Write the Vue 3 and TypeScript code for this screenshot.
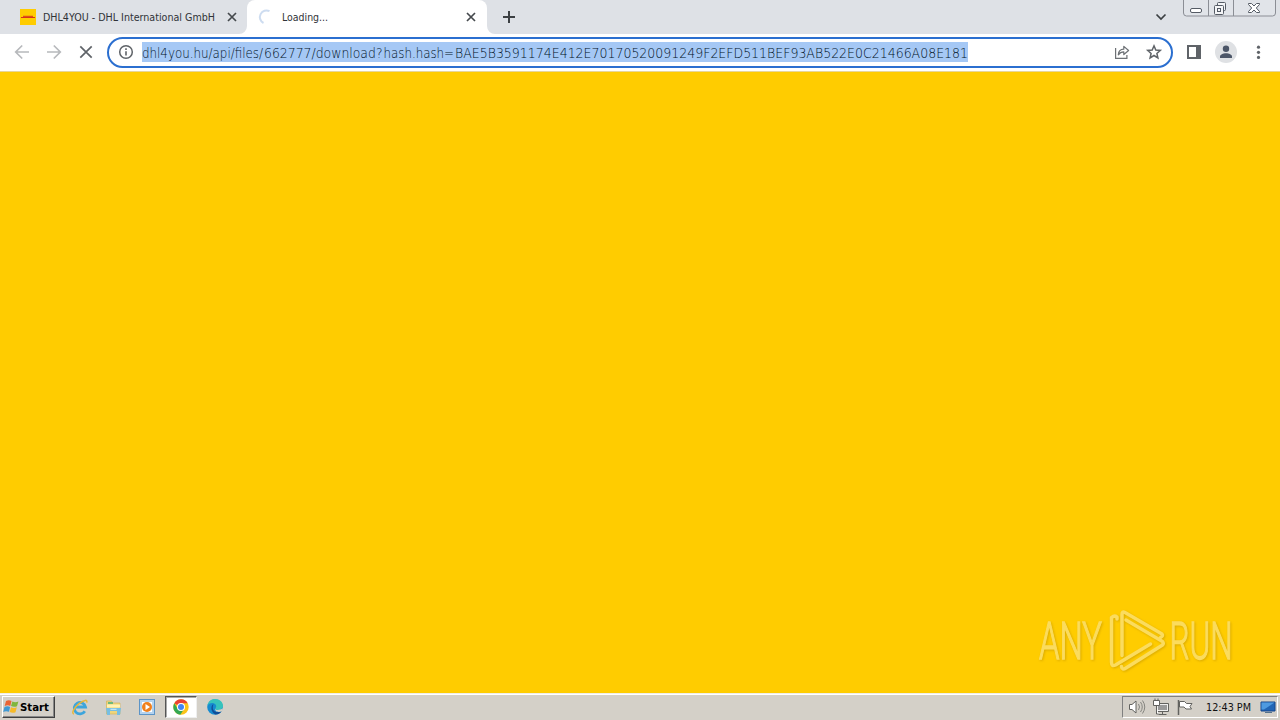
<script setup lang="ts">
interface Segment {
  text: string
  x: number
  width: number
}

const address: Segment[] = [
  { text: 'dhl4you.hu/api/files/', x: 0, width: 121 },
  { text: '662777/download?', x: 122, width: 118.5 },
  { text: 'hash.hash=', x: 241.5, width: 70.5 },
  { text: 'BAE5B3591174E412E70170520091249F2EFD511BEF93AB522E0C21466A08E181', x: 313, width: 513 },
]
</script>

<template>
  <div class="screen">
    <header class="tabs">
      <div class="tab first">
        <svg class="favicon" width="16" height="16" viewBox="0 0 16 16">
          <path fill="#fc0" d="M0 0h16v16H0z" />
          <path d="M1 8.500h14M3 7.300h10" stroke="#d8321c" stroke-width="1" />
        </svg>
        <svg class="title" width="176" height="20"><text x="0" y="14" textLength="172" lengthAdjust="spacingAndGlyphs">DHL4YOU - DHL International GmbH</text></svg>
        <svg class="close" width="10" height="10" viewBox="0 0 10 10"><path d="M1 1l8 8M9 1l-8 8" /></svg>
      </div>
      <div class="tab active">
        <svg class="curve left" width="8" height="8"><path d="M8 0v8H0a8 8 0 0 0 8-8" fill="#fff" /></svg>
        <svg class="favicon" width="16" height="16" viewBox="0 0 16 16"><path d="M11.500 2.200A6.200 6.200 0 1 0 5.500 14" fill="none" stroke="#cddcf0" stroke-width="2" /></svg>
        <svg class="title" width="176" height="20"><text x="0" y="14" textLength="46" lengthAdjust="spacingAndGlyphs">Loading...</text></svg>
        <svg class="close" width="10" height="10" viewBox="0 0 10 10"><path d="M1 1l8 8M9 1l-8 8" /></svg>
        <svg class="curve right" width="8" height="8"><path d="M0 0v8h8a8 8 0 0 1-8-8" fill="#fff" /></svg>
      </div>
      <svg class="plus" width="14" height="14"><path d="M7 1v12M1 7h12" stroke="#3c4043" stroke-width="2" /></svg>
      <svg class="chevron" width="12" height="8"><path d="M1.500 1.500L6 6l4.500-4.500" fill="none" stroke="#3c4043" stroke-width="1.700" /></svg>
      <svg class="window-controls" width="95" height="18" viewBox="0 0 95 18">
        <path d="M.5 0v13a3 3 0 0 0 3 3h86a3 3 0 0 0 3-3V0M25.500 0v16M50.500 0v16" fill="#e1e4e9" stroke="#8b8e95" />
        <rect x="7.500" y="8.500" width="11" height="4" rx="1.500" fill="#fff" stroke="#555b65" />
        <g fill="#f4f5f7" stroke="#555b65"><rect x="34.500" y="2.500" width="8" height="8" rx="1" /><rect x="31.500" y="5.500" width="9" height="9" rx="1" /><rect x="34.500" y="8.500" width="3" height="3" /></g>
        <path d="M66.500 3.500h3l2.500 2.500 2.500-2.500h3v1L74.300 8l3.200 3.500v1h-3L72 10l-2.500 2.500h-3v-1L69.700 8l-3.200-3.500z" fill="#fff" stroke="#555b65" transform="translate(-1 0)" />
      </svg>
    </header>

    <nav class="toolbar">
      <svg class="navigation" width="107" height="37" viewBox="0 34 107 37" fill="none" stroke-width="1.700">
        <g stroke="#b7b9bc"><path d="M29 52H15.800M22.200 45.500L15.700 52l6.500 6.500" /><path d="M47 52h13.200M53.800 45.500l6.500 6.500-6.500 6.500" /></g>
        <path d="M80.300 46.300l11.400 11.400M91.700 46.300L80.300 57.700" stroke="#5f6368" />
      </svg>
      <div class="omnibox">
        <svg class="info" width="16" height="16" viewBox="0 0 16 16"><circle cx="8" cy="8" r="6.300" fill="none" stroke="#5f6368" stroke-width="1.500" /><path d="M8 7.200v4.200M8 4.300v1.600" stroke="#5f6368" stroke-width="1.600" /></svg>
        <svg class="url" width="826" height="20">
          <text v-for="part in address" :key="part.x" :x="part.x" y="16" :textLength="part.width" lengthAdjust="spacingAndGlyphs">{{ part.text }}</text>
        </svg>
        <svg class="share" width="16" height="16" viewBox="0 0 16 16" fill="none" stroke="#6d7175" stroke-width="1.200"><path d="M1.600 4v10.400h11.300V11" /><path d="M4.300 10.800C4.500 7 6.400 5.300 9.800 5.200V2.400L14.600 6.500 9.800 10.500V7.800C7.400 7.800 5.700 8.700 4.300 10.800z" stroke-linejoin="round" /></svg>
        <svg class="star" width="16" height="16" viewBox="0 0 16 16"><path d="M8 1.800l1.800 4.200 4.500.4-3.400 3 1 4.500L8 11.500l-3.900 2.400 1-4.500-3.400-3 4.500-.4z" fill="none" stroke="#5f6368" stroke-width="1.500" /></svg>
      </div>
      <svg class="actions" width="107" height="37" viewBox="1173 34 107 37">
        <path d="M1188 46h12v12h-12z" fill="none" stroke="#5f6368" stroke-width="2" /><path d="M1196 45h5v14h-5z" fill="#5f6368" />
        <circle cx="1226" cy="52" r="11" fill="#dfe1e4" /><circle cx="1226" cy="48.800" r="3.200" fill="#4c5668" /><path d="M1220 58v-1.500c0-2 3-3.300 6-3.300s6 1.300 6 3.300V58z" fill="#4c5668" />
        <g fill="#5f6368"><circle cx="1258.500" cy="47.200" r="1.600" /><circle cx="1258.500" cy="52.300" r="1.600" /><circle cx="1258.500" cy="57.400" r="1.600" /></g>
      </svg>
    </nav>

    <main class="page">
      <svg class="watermark" width="198" height="68" viewBox="1036 607 198 68">
        <g class="lettering"><text transform="translate(1039 659) scale(1 1.380)" textLength="63" lengthAdjust="spacingAndGlyphs">ANY</text><text transform="translate(1169.500 659) scale(1 1.380)" textLength="63" lengthAdjust="spacingAndGlyphs">RUN</text></g>
        <g class="play">
          <path d="M1122 655.500V614.500q0-3.500 3-2l37 21.500q1.500 2-1.500 3.500" />
          <path d="M1117 619v-2q-2.500-2-5.500.5V662q0 5 4 3l35-21" />
          <path d="M1126 620l36.500 21.500q1.500 2 0 3.500L1126 668q-4 2.500-4.500-1.500" />
        </g>
      </svg>
    </main>

    <footer class="taskbar">
      <div class="start">
        <svg width="17" height="16" viewBox="0 0 17 16">
          <path d="M3 2c2-1 4-.8 5.500 0L7.300 7C5.600 6 3.800 6.100 1.700 7z" fill="#ea6435" /><path d="M9.400 2.500c2 .9 4 .9 6-.1L14 7.200c-2 .9-4 .8-6-.1z" fill="#80b63d" /><path d="M1.500 8c2-.9 4-.9 5.600 0L6 12.800c-2-.9-4-.8-5.800.1z" fill="#4099d4" /><path d="M8 8.300c2 .9 4 .9 5.800 0l-1.300 4.900c-2 .8-4 .7-5.800-.2z" fill="#f6ba29" />
        </svg>
        <svg width="30" height="18"><text x="0" y="13" textLength="29" lengthAdjust="spacingAndGlyphs">Start</text></svg>
      </div>
      <svg class="quick" width="94" height="24" viewBox="68 695 94 24">
        <path d="M84.800 711.200a5.700 5.700 0 1 1 .7-4.200H75.500" fill="none" stroke="#3da5dc" stroke-width="2.800" /><path d="M74 714c-3-.5 0-6.500 5-10.400s9-4.300 7.600-1" fill="none" stroke="#e8b73a" stroke-width="1.500" />
        <path d="M106.500 701h5l1 2h7.500v11h-13.500z" fill="#efd57b" stroke="#d6b55b" stroke-width=".7" /><path d="M108 702h5v2h-5z" fill="#6eb97a" /><path d="M107 704.500h13v3h-13z" fill="#fff2b5" /><path d="M106 708h15l-1 7h-3v-4h-7v4h-3z" fill="#77bee3" /><path d="M110.500 709.300h6" stroke="#d1eff9" />
        <rect x="139.500" y="699.500" width="15" height="15" fill="#b4d3ef" stroke="#5c94c7" /><path d="M142 702h10v10h-10z" fill="#fff" /><circle cx="147" cy="707" r="5" fill="#ef801e" /><path d="M145.500 704l4.500 3-4.500 3z" fill="#fff" />
      </svg>
      <div class="running">
        <svg width="16" height="16" viewBox="0 0 16 16"><circle cx="8" cy="8" r="7.700" fill="#fbc319" /><path d="M8 8L1.300 4.200A7.700 7.700 0 0 1 14.700 4.200H8z" fill="#e94235" /><path d="M1.300 4.200A7.700 7.700 0 0 0 7.300 15.700L11.200 9.800 8 8 4.800 9.900z" fill="#34a853" /><circle cx="8" cy="8" r="4" fill="#fff" /><circle cx="8" cy="8" r="3" fill="#4285f4" /></svg>
      </div>
      <svg class="edge" width="16" height="16" viewBox="0 0 16 16"><circle cx="8" cy="8" r="7.800" fill="#168bd0" /><path d="M.3 7C1.300 2.500 4 0 8 0c4.700 0 8 3.400 8 6.500 0 2.700-2.200 4.500-5 4.500-1.800 0-2.500-.7-2.500-1.500 0-.9.700-1 .7-2.200C9.200 5.500 7.500 4 5.300 4 3 4 1.200 5.300.3 7z" fill="#36c3bc" /><path d="M6.300 5c-3 2.500-2.500 8 2.200 10.500 2.500 0 5-1.300 6.200-3.300-4.500 2-8.900.1-8.900-3.500 0-1.700.6-3 .5-3.700z" fill="#114d98" /><path d="M8.500 9.500c0 1.800 3.500 2.300 6.800.1.400-.3.900 1.700-.5 2.700-3.600 1.500-7.500.1-6.300-2.800z" fill="#d4d0c8" /></svg>
      <div class="tray">
        <svg width="80" height="20" viewBox="1124 697 80 20" fill="none" stroke="#62625f">
          <path d="M1129.500 704.500h2.500l4-3.500v12l-4-3.500h-2.500z" fill="#fff" /><path d="M1138.500 704q2 3 0 6M1140.500 702q3.500 5 0 10M1142.500 700.500q4.500 6.500 0 13" stroke="#858580" />
          <path d="M1156.500 703.500h12v8h-12z" fill="#eee" /><path d="M1158 705h9v5h-9z" fill="#999" stroke="none" /><path d="M1162.500 711.500v3M1158.500 714.500h8" /><path d="M1153.500 700.500h6v5h-6zM1155 698.500v2M1158 698.500v2M1156.500 705.500v8.500h2" fill="#fff" />
          <path d="M1178.500 700v15" stroke-width="1.500" /><path d="M1179.500 701.500h5l2 2h5.500l-2 3 1.500 2.500h-5.500l-2-2h-4.500z" fill="#fff" />
        </svg>
        <svg class="clock" width="46" height="18"><text x="0" y="13" textLength="45" lengthAdjust="spacingAndGlyphs">12:43 PM</text></svg>
        <svg class="desktop" width="17" height="14"><path d="M1 2h14v9H1z" fill="#2165b5" stroke="#17478b" /><path d="M1.500 2.500h13L4 9.500H1.500z" fill="#4e9ae0" /><path d="M5 12.500h7" stroke="#54718c" /></svg>
      </div>
    </footer>
  </div>
</template>

<style>
html, body { margin: 0; overflow: hidden; }
</style>
<style scoped>
* { box-sizing: border-box; }
svg { display: block; flex: none; overflow: visible; }
.screen { width: 1280px; height: 720px; display: flex; flex-direction: column; font-family: "DejaVu Sans Condensed", "DejaVu Sans", sans-serif; }
.tabs { height: 34px; background: #dee1e6; display: flex; align-items: flex-start; }
.tab { display: flex; align-items: center; height: 34px; position: relative; }
.first { width: 247px; padding-left: 20px; }
.active { width: 240px; padding-left: 11px; background: #fff; border-radius: 8px 8px 0 0; }
.title { margin-left: 7px; font-size: 11px; fill: #303338; }
.active .title { margin-left: 8px; }
.close { margin-left: 8px; }
.close path { stroke: #45494d; stroke-width: 1.7; }
.curve { position: absolute; bottom: 0; }
.left { left: -8px; }
.right { right: -8px; }
.plus { margin: 10px 0 0 15px; }
.chevron { margin: 13px 0 0 639px; }
.window-controls { margin-left: 16px; }
.toolbar { height: 37px; background: #fff; display: flex; }
.omnibox { width: 1066px; height: 31px; margin-top: 3px; border: 2px solid #2b6fd0; border-radius: 16px; display: flex; align-items: center; padding: 0 0 1px 9px; background: #fff; }
.url { margin-left: 8px; background: #a5c8f5; font-family: "DejaVu Sans", sans-serif; font-weight: 200; font-size: 14px; fill: #001226; }
.share { margin-left: 146px; }
.star { margin-left: 16px; }
.page { flex: 1; background: #fc0; border-top: 1px solid #e7d69a; display: flex; align-items: flex-end; justify-content: flex-end; padding: 0 46px 18px 0; }
.watermark { filter: drop-shadow(1px 1px 1px #bd910088); }
.lettering { fill: #fbdc5e; stroke: #fbdc5e; stroke-width: 1; font-family: "Roboto", sans-serif; font-size: 37px; font-weight: 300; }
.play { fill: none; stroke: #fbdc5e; stroke-width: 3.5; stroke-linejoin: round; stroke-linecap: round; }
.taskbar { height: 27px; background: #d4d0c8; border-top: 1px solid #f0eee9; box-shadow: inset 0 1px #fff; display: flex; align-items: center; }
.start { width: 53px; height: 22px; margin: 0 0 1px 2px; border: 1px solid #fff; border-right-color: #404040; border-bottom-color: #404040; box-shadow: inset -1px -1px #888; display: flex; align-items: center; font-weight: 700; font-size: 11px; }
.quick { margin-left: 13px; }
.running { width: 32px; height: 22px; margin-left: 3px; background: #fff; border: 1px solid #555; border-right-color: #eee; border-bottom-color: #eee; box-shadow: inset 1px 1px #aaa; display: flex; align-items: center; justify-content: center; }
.edge { margin-left: 10px; }
.tray { margin-left: auto; margin-right: 2px; width: 156px; height: 22px; border: 1px solid #808080; border-right-color: #fff; border-bottom-color: #fff; display: flex; align-items: center; padding-left: 1px; }
.clock { margin-left: 2px; font-size: 11px; fill: #111; }
.desktop { margin-left: 8px; }
</style>
